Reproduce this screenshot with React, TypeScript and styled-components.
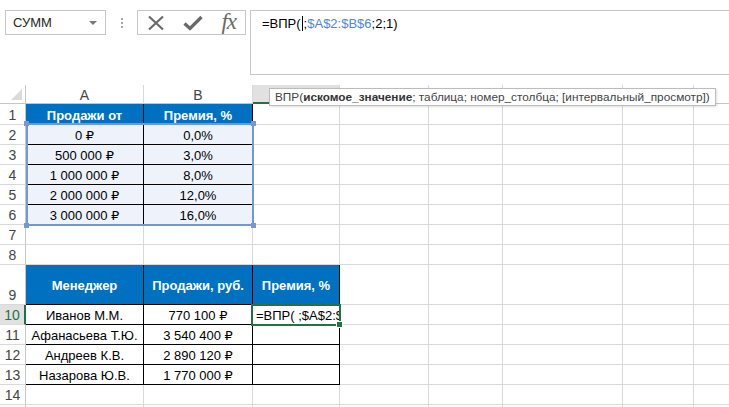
import { Fragment } from "react";
import styled, { createGlobalStyle, css } from "styled-components";

const GlobalStyle = createGlobalStyle`
  html, body {
    margin: 0;
    padding: 0;
    background: #ffffff;
  }
  body {
    font-family: "Liberation Sans", "DejaVu Sans", Arial, sans-serif;
    overflow: hidden;
  }
`;

const GRID_LINE = "#d9d9d9";
const HEADER_LINE = "#c6c6c6";
const EXCEL_GREEN = "#217346";
const TABLE_BLUE = "#0070c0";
const REF_BLUE = "#7497dc";

const Page = styled.div`
  width: 729px;
  height: 407px;
  overflow: hidden;
  display: flex;
  flex-direction: column;
`;

const TopBar = styled.div`
  height: 85px;
  flex: none;
  box-sizing: border-box;
  display: flex;
  align-items: flex-start;
  padding: 10px 0 0 5px;
`;

const NameBox = styled.div`
  width: 101px;
  height: 25px;
  box-sizing: border-box;
  border: 1px solid #c6c6c6;
  display: flex;
  align-items: center;
  justify-content: space-between;
  padding: 0 8px 0 7px;
  font-size: 13px;
  color: #262626;
`;

const Caret = styled.span`
  width: 0;
  height: 0;
  border-left: 4px solid transparent;
  border-right: 4px solid transparent;
  border-top: 4px solid #777777;
`;

const Grip = styled.div`
  width: 31px;
  height: 25px;
  display: flex;
  flex-direction: column;
  align-items: center;
  justify-content: center;
  gap: 2px;
`;

const GripDot = styled.span`
  width: 2px;
  height: 2px;
  background: #a6a6a6;
`;

const FnButtons = styled.div`
  width: 109px;
  height: 25px;
  box-sizing: border-box;
  border: 1px solid #c6c6c6;
  display: flex;
  align-items: center;
  justify-content: space-between;
  padding: 0 9px 0 9px;
`;

const FnText = styled.span`
  font-family: "Liberation Serif", "DejaVu Serif", serif;
  font-style: italic;
  font-size: 23px;
  line-height: 1;
  color: #6a6a6a;
  letter-spacing: -1px;
  margin-top: -3px;
`;

const FormulaBar = styled.div`
  flex: 1;
  height: 65px;
  margin-left: 4px;
  margin-right: -2px;
  box-sizing: border-box;
  border: 1px solid #c6c6c6;
  padding: 4px 11px;
  font-size: 13px;
  line-height: 17px;
  color: #000000;
  white-space: nowrap;
`;

const RefText = styled.span`
  color: #4f87d8;
`;

const Cursor = styled.span`
  display: inline-block;
  width: 0;
  height: 15px;
  border-left: 1px solid #000;
  vertical-align: -3px;
  margin: 0 1px;
`;

const Sheet = styled.div`
  position: relative;
  display: grid;
  grid-template-columns: 26px 118px 109px 87px 89px 74px 120px 71px 90px;
  grid-template-rows: 19px 21px repeat(7, 20px) 40px repeat(6, 20px);
  font-size: 13px;
  color: #000000;
`;

type Pos = { $r: number; $c: number };

const placed = css<Pos>`
  grid-row: ${({ $r }) => $r};
  grid-column: ${({ $c }) => $c};
`;

const Corner = styled.div`
  grid-row: 1;
  grid-column: 1;
  box-sizing: border-box;
  border-right: 1px solid ${HEADER_LINE};
  border-bottom: 1px solid ${HEADER_LINE};
  background: #ffffff;
  position: relative;

  &::after {
    content: "";
    position: absolute;
    right: 3px;
    bottom: 3px;
    width: 0;
    height: 0;
    border-left: 11px solid transparent;
    border-bottom: 11px solid #dadada;
  }
`;

const ColHead = styled.div<Pos & { $active?: boolean }>`
  ${placed}
  box-sizing: border-box;
  display: flex;
  align-items: center;
  justify-content: center;
  padding-top: 2px;
  font-size: 14px;
  color: #444444;
  background: #ffffff;
  border-right: 1px solid ${GRID_LINE};
  border-bottom: 1px solid ${HEADER_LINE};

  ${({ $active }) =>
    $active &&
    css`
      background: #e1e1e1;
      color: ${EXCEL_GREEN};
      border-bottom: 2px solid ${EXCEL_GREEN};
    `}
`;

const RowHead = styled.div<Pos & { $active?: boolean }>`
  ${placed}
  box-sizing: border-box;
  display: flex;
  align-items: flex-end;
  justify-content: center;
  padding-bottom: 1px;
  font-size: 14px;
  color: #444444;
  background: #ffffff;
  border-right: 1px solid ${HEADER_LINE};
  border-bottom: 1px solid ${GRID_LINE};

  ${({ $active }) =>
    $active &&
    css`
      background: #e1e1e1;
      color: ${EXCEL_GREEN};
      border-right: 2px solid ${EXCEL_GREEN};
    `}
`;

type CellKind = "plain" | "head" | "tint" | "box";

const Cell = styled.div<Pos & { $kind: CellKind; $left?: boolean }>`
  ${placed}
  box-sizing: border-box;
  display: flex;
  align-items: center;
  justify-content: ${({ $left }) => ($left ? "flex-start" : "center")};
  padding: ${({ $left }) => ($left ? "2px 0 0 3px" : "2px 2px 0")};
  overflow: hidden;
  white-space: nowrap;
  border-right: 1px solid ${GRID_LINE};
  border-bottom: 1px solid ${GRID_LINE};
  background: #ffffff;

  ${({ $kind }) =>
    $kind === "head" &&
    css`
      background: ${TABLE_BLUE};
      color: #ffffff;
      font-weight: bold;
      border-color: #000000;
    `}

  ${({ $kind }) =>
    $kind === "tint" &&
    css`
      background: #edf2fb;
      border-color: #000000;
    `}

  ${({ $kind }) =>
    $kind === "box" &&
    css`
      border-color: #000000;
    `}
`;

const RefRange = styled.div`
  grid-column: 2 / 4;
  grid-row: 3 / 8;
  margin: -2px -1px -1px 0;
  border: 2px solid ${REF_BLUE};
  position: relative;
  pointer-events: none;
`;

const Handle = styled.span<{ $right?: boolean; $bottom?: boolean }>`
  position: absolute;
  width: 5px;
  height: 5px;
  background: ${REF_BLUE};
  ${({ $right }) => ($right ? "right: -4px;" : "left: -4px;")}
  ${({ $bottom }) => ($bottom ? "bottom: -4px;" : "top: -4px;")}
`;

const ActiveCell = styled.div`
  grid-column: 4 / 5;
  grid-row: 11 / 12;
  margin: -1px -1px -1px -2px;
  border: 2px solid ${EXCEL_GREEN};
  position: relative;
  pointer-events: none;
`;

const FillHandle = styled.span`
  position: absolute;
  right: -4px;
  bottom: -4px;
  width: 5px;
  height: 5px;
  background: ${EXCEL_GREEN};
  border: 1px solid #ffffff;
`;

const Tooltip = styled.div`
  position: absolute;
  left: 269px;
  top: 3px;
  height: 18px;
  box-sizing: border-box;
  padding: 0 5px;
  display: flex;
  align-items: center;
  background: #ffffff;
  border: 1px solid #bcbcbc;
  box-shadow: 1px 1px 2px rgba(0, 0, 0, 0.12);
  font-size: 11.8px;
  color: #444444;
  white-space: nowrap;
  z-index: 3;
`;

const Bold = styled.b`
  font-weight: bold;
  color: #333333;
`;

type CellSpec = { text?: string; kind?: CellKind; left?: boolean };

const columns = ["A", "B", "C", "D", "E", "F", "G", "H"];

const rows: Record<number, CellSpec[]> = {
  1: [
    { text: "Продажи от", kind: "head" },
    { text: "Премия, %", kind: "head" },
  ],
  2: [
    { text: "0 ₽", kind: "tint" },
    { text: "0,0%", kind: "tint" },
  ],
  3: [
    { text: "500 000 ₽", kind: "tint" },
    { text: "3,0%", kind: "tint" },
  ],
  4: [
    { text: "1 000 000 ₽", kind: "tint" },
    { text: "8,0%", kind: "tint" },
  ],
  5: [
    { text: "2 000 000 ₽", kind: "tint" },
    { text: "12,0%", kind: "tint" },
  ],
  6: [
    { text: "3 000 000 ₽", kind: "tint" },
    { text: "16,0%", kind: "tint" },
  ],
  9: [
    { text: "Менеджер", kind: "head" },
    { text: "Продажи, руб.", kind: "head" },
    { text: "Премия, %", kind: "head" },
  ],
  10: [
    { text: "Иванов М.М.", kind: "box" },
    { text: "770 100 ₽", kind: "box" },
    { text: "=ВПР( ;$A$2:$B$6;2;1)", kind: "box", left: true },
  ],
  11: [
    { text: "Афанасьева Т.Ю.", kind: "box" },
    { text: "3 540 400 ₽", kind: "box" },
    { kind: "box" },
  ],
  12: [
    { text: "Андреев К.В.", kind: "box" },
    { text: "2 890 120 ₽", kind: "box" },
    { kind: "box" },
  ],
  13: [
    { text: "Назарова Ю.В.", kind: "box" },
    { text: "1 770 000 ₽", kind: "box" },
    { kind: "box" },
  ],
};

const rowNumbers = Array.from({ length: 15 }, (_, i) => i + 1);

export default function App() {
  return (
    <Page>
      <GlobalStyle />
      <TopBar>
        <NameBox>
          СУММ
          <Caret />
        </NameBox>
        <Grip>
          <GripDot />
          <GripDot />
          <GripDot />
        </Grip>
        <FnButtons>
          <svg width="18" height="16" viewBox="0 0 18 16">
            <path
              d="M2 1.5 L16 14.5 M16 1.5 L2 14.5"
              stroke="#6a6a6a"
              strokeWidth="2.2"
              fill="none"
            />
          </svg>
          <svg width="20" height="16" viewBox="0 0 20 16">
            <path
              d="M1.5 8.5 L7 13.5 L18.5 2"
              stroke="#6a6a6a"
              strokeWidth="3.2"
              fill="none"
            />
          </svg>
          <FnText>fx</FnText>
        </FnButtons>
        <FormulaBar>
          =ВПР(
          <Cursor />;<RefText>$A$2:$B$6</RefText>;2;1)
        </FormulaBar>
      </TopBar>

      <Sheet>
        <Corner />
        {columns.map((c, i) => (
          <ColHead key={c} $r={1} $c={i + 2} $active={c === "C"}>
            {c}
          </ColHead>
        ))}

        {rowNumbers.map((r) => {
          const specs = rows[r] ?? [];
          return (
            <Fragment key={r}>
              <RowHead $r={r + 1} $c={1} $active={r === 10}>
                {r}
              </RowHead>
              {columns.map((c, i) => {
                const spec = specs[i] ?? {};
                return (
                  <Cell
                    key={c}
                    $r={r + 1}
                    $c={i + 2}
                    $kind={spec.kind ?? "plain"}
                    $left={spec.left}
                  >
                    {spec.text}
                  </Cell>
                );
              })}
            </Fragment>
          );
        })}

        <RefRange>
          <Handle />
          <Handle $right />
          <Handle $bottom />
          <Handle $right $bottom />
        </RefRange>
        <ActiveCell>
          <FillHandle />
        </ActiveCell>

        <Tooltip>
          ВПР(<Bold>искомое_значение</Bold>; таблица; номер_столбца;
          [интервальный_просмотр])
        </Tooltip>
      </Sheet>
    </Page>
  );
}
